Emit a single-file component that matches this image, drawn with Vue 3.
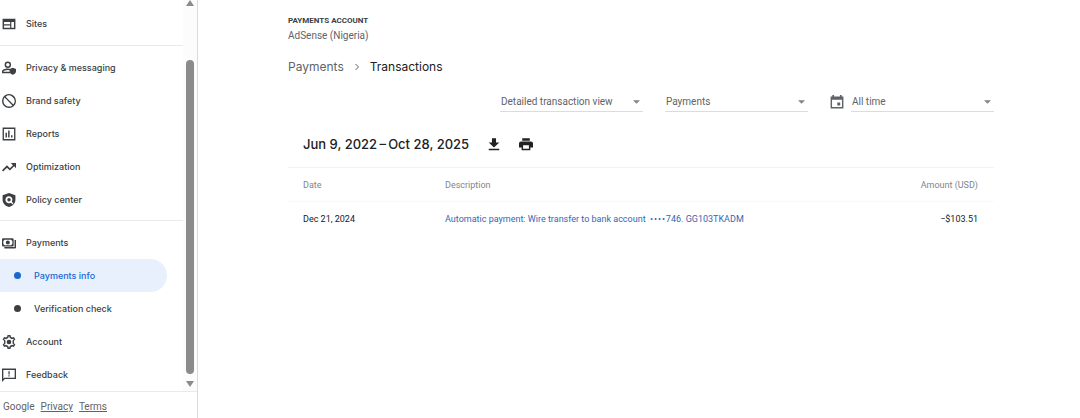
<template>
  <div class="layout">
    <aside class="sidebar">
      <div class="sidebar-body">
        <nav class="nav" aria-label="Main">
          <ul v-for="(group, index) in groups" :key="index" class="nav-group">
            <li v-for="item in group" :key="item.label">
              <a
                href="#"
                :class="['nav-item', { child: item.child, active: item.active }]"
                :aria-current="item.active ? 'page' : undefined"
              >
                <span v-if="item.child" class="dot" aria-hidden="true"></span>
                <svg v-else class="nav-icon" viewBox="0 0 24 24" aria-hidden="true">
                  <path :d="icons[item.icon]" fill-rule="evenodd" />
                </svg>
                <span>{{ item.label }}</span>
              </a>
            </li>
          </ul>
        </nav>
        <div class="scrollbar" aria-hidden="true">
          <svg class="scroll-arrow" viewBox="0 0 8 6"><path d="M4 0 8 6H0z" /></svg>
          <div class="scroll-thumb"></div>
          <svg class="scroll-arrow" viewBox="0 0 8 6"><path d="M4 6 0 0h8z" /></svg>
        </div>
      </div>
      <footer class="sidebar-footer">
        <span>Google</span>
        <a href="#">Privacy</a>
        <a href="#">Terms</a>
      </footer>
    </aside>

    <main class="content">
      <header class="account">
        <div class="account-label">Payments account</div>
        <div class="account-name">AdSense (Nigeria)</div>
      </header>

      <nav class="breadcrumb" aria-label="Breadcrumb">
        <a href="#">Payments</a>
        <svg viewBox="0 0 6 8" aria-hidden="true"><path d="M1.5 1 4.5 4l-3 3" /></svg>
        <span aria-current="page">Transactions</span>
      </nav>

      <div class="filters">
        <div v-for="filter in filters" :key="filter.label" class="filter">
          <svg v-if="filter.calendar" class="calendar" viewBox="0 0 24 24" aria-hidden="true">
            <path :d="icons.calendar" fill-rule="evenodd" />
          </svg>
          <div class="select-wrap">
            <select v-model="filter.value" :aria-label="filter.label">
              <option>{{ filter.value }}</option>
            </select>
            <svg class="caret" viewBox="0 0 8 4" aria-hidden="true"><path d="M0 0h8L4 4z" /></svg>
          </div>
        </div>
      </div>

      <div class="period">
        <h1>Jun 9, 2022&thinsp;–&thinsp;Oct 28, 2025</h1>
        <button type="button" aria-label="Download">
          <svg viewBox="0 0 24 24"><path :d="icons.download" /></svg>
        </button>
        <button type="button" aria-label="Print">
          <svg viewBox="0 0 24 24"><path :d="icons.print" /></svg>
        </button>
      </div>

      <table class="transactions">
        <thead>
          <tr>
            <th class="date">Date</th>
            <th>Description</th>
            <th class="amount">Amount (USD)</th>
          </tr>
        </thead>
        <tbody>
          <tr v-for="row in transactions" :key="row.account">
            <td>{{ row.date }}</td>
            <td>
              <a href="#">{{ row.description }}&nbsp; •&hairsp;•&hairsp;•&hairsp;•&hairsp;{{ row.account }}</a>
            </td>
            <td class="amount">{{ row.amount }}</td>
          </tr>
        </tbody>
      </table>
    </main>
  </div>
</template>

<script setup>
import { ref } from 'vue'

const groups = [
  [{ label: 'Sites', icon: 'sites' }],
  [
    { label: 'Privacy & messaging', icon: 'privacy' },
    { label: 'Brand safety', icon: 'block' },
    { label: 'Reports', icon: 'reports' },
    { label: 'Optimization', icon: 'trend' },
    { label: 'Policy center', icon: 'policy' },
  ],
  [
    { label: 'Payments', icon: 'payments' },
    { label: 'Payments info', child: true, active: true },
    { label: 'Verification check', child: true },
    { label: 'Account', icon: 'settings' },
    { label: 'Feedback', icon: 'feedback' },
  ],
]

const filters = ref([
  { label: 'Transaction view', value: 'Detailed transaction view' },
  { label: 'Transaction type', value: 'Payments' },
  { label: 'Date range', value: 'All time', calendar: true },
])

const transactions = [
  {
    date: 'Dec 21, 2024',
    description: 'Automatic payment: Wire transfer to bank account',
    account: '746. GG103TKADM',
    amount: '−$103.51',
  },
]

const icons = {
  sites: 'M1 3h22v18H1zM3.500 8.500v4h10.500v-4zM3.500 14.500v4h10.500v-4zM16 8.500v10h4.500v-10z',
  privacy: 'M10 1a5.500 5.500 0 1 1 0 11 5.500 5.500 0 0 1 0-11zm0 2.500a3 3 0 1 0 0 6 3 3 0 0 0 0-6zM0 21v-3c0-3 5-5 10-5l3 .3v2.500l-3-.3c-4 0-7.500 1.500-7.500 2.500v.5H13l1 2.500zM18.500 11.500l5.500 2v4c0 3-2.500 5-5.500 6-3-1-5.500-3-5.500-6v-4z',
  block: 'M12 0a12 12 0 1 0 0 24 12 12 0 0 0 0-24zM2.500 12c0-2.200.8-4.200 2-5.800L17.800 19.500A9.500 9.500 0 0 1 2.500 12zm17 5.800L6.200 4.500a9.500 9.500 0 0 1 13.300 13.300z',
  reports: 'M1 1h22v22H1zM3.300 3.300v17.400h17.400V3.300zM6 10h2.500v8H6zM10.500 6H13v12h-2.500zM15.500 14H18v4h-2.500z',
  trend: 'M15 5h9v9l-3.200-3.200-7.300 7.300-5-5-6.500 6.500L0 17.600l8.500-8.500 5 5 5.300-5.300z',
  policy: 'M12 0 23 4v7.500c0 6-4.500 10.500-11 12.500C5.500 22 1 17.500 1 11.500V4zM12 5.500a6 6 0 1 0 3.200 11l2.800 2.800 1.600-1.600-2.800-2.800A6 6 0 0 0 12 5.500zM12 8.500a3 3 0 1 1 0 6 3 3 0 0 1 0-6z',
  payments: 'M2 4h16a2 2 0 0 1 2 2v10a2 2 0 0 1-2 2H2a2 2 0 0 1-2-2V6a2 2 0 0 1 2-2zM4.500 6.300 2.300 8.500v5l2.200 2.200h11l2.200-2.200v-5l-2.200-2.200zM10 7.500a3.500 3.500 0 1 1 0 7 3.500 3.500 0 0 1 0-7zM21.500 7H24v12.500a2 2 0 0 1-2 2H4V19h17.500z',
  settings: 'M9.500 0h5l.7 3.200 2 1.200 3.200-1 2.500 4.300-2.400 2.300v4l2.400 2.300-2.500 4.300-3.200-1-2 1.200-.7 3.200h-5l-.7-3.200-2-1.200-3.200 1-2.500-4.300L3.500 14v-4L1.100 7.700l2.500-4.300 3.200 1 2-1.200zM11.400 2.500l-.6 2.500L7 7.200l-2.500-.8-.6 1.100 2 1.900v5.200l-2 1.900.6 1.100 2.500-.8 3.800 2.200.6 2.500h1.200l.6-2.500 3.800-2.200 2.500.8.600-1.100-2-1.900V9.400l2-1.900-.6-1.100-2.500.8L13.200 5l-.6-2.500zM12 8a4 4 0 1 1 0 8 4 4 0 0 1 0-8z',
  feedback: 'M0 1h24v18H5l-5 5zM2.300 3.300v15l1.700-1.600h17.700V3.300zM11 5.500h2.200v5.500H11zM11 12.500h2.200v2.200H11z',
  calendar: 'M4 0h3v2.500h10V0h3v2.500h3V23H1V2.500h3zM3.500 8v12.500h17V8zM12.500 13h5v5h-5z',
  download: 'M8.500 2h7v7.500H21l-9 8.500-9-8.500h5.500zM3 20h18v2.500H3z',
  print: 'M5.500 2h13v4.500h-13zM3.500 7.500h17A3.500 3.500 0 0 1 24 11v7h-4.500v4.500h-15V18H0v-7a3.500 3.500 0 0 1 3.500-3.500zM7 14v6h10v-6z',
}
</script>

<style>
body {
  background: #fff;
}
</style>

<style scoped>
.layout {
  display: flex;
  min-height: 100vh;
  color: #3c4043;
  font-family: Roboto, sans-serif;
}

a {
  color: inherit;
}

/* Sidebar */
.sidebar {
  display: flex;
  flex-direction: column;
  box-sizing: border-box;
  width: 198px;
  flex-shrink: 0;
  border-right: 1px solid #dadce0;
}

.sidebar-body {
  display: flex;
}

.nav {
  flex: 1;
  padding-top: 7px;
  font-family: Inter, sans-serif;
  font-size: 9px;
  font-weight: 500;
}

.nav-group {
  list-style: none;
  margin: 0;
  padding: 0;
}

.nav-group + .nav-group {
  margin-top: 4px;
  padding-top: 5px;
  border-top: 1px solid #e8eaed;
}

.nav-group:first-child {
  padding-bottom: 1px;
}

.nav-item {
  display: flex;
  align-items: center;
  gap: 10px;
  box-sizing: border-box;
  height: 33px;
  margin-right: 16px;
  padding-left: 2px;
  border-radius: 0 17px 17px 0;
  text-decoration: none;
}

.nav-item.child {
  gap: 13px;
  padding-left: 14px;
}

.nav-item.active {
  background: #e8f0fe;
  color: #1967d2;
}

.nav-icon {
  width: 14px;
  height: 14px;
  fill: #3c4043;
}

.dot {
  width: 7px;
  height: 7px;
  border-radius: 50%;
  background: currentColor;
}

.scrollbar {
  display: flex;
  flex-direction: column;
  align-items: center;
  width: 14px;
  padding-bottom: 4px;
  background: #fcfcfc;
}

.scroll-arrow {
  width: 8px;
  height: 6px;
  fill: #8b8b8b;
}

.scroll-thumb {
  flex: 1;
  width: 8px;
  margin: 54px 0 7px;
  border-radius: 4px;
  background: #8b8b8b;
}

.sidebar-footer {
  display: flex;
  gap: 6px;
  padding: 9px 3px;
  border-top: 1px solid #e8eaed;
  color: #5f6368;
  font-size: 10px;
  line-height: 12px;
}

/* Main content */
.content {
  flex: 1;
  padding: 15px 86px 0 90px;
}

.account-label {
  color: #3c4043;
  font-size: 8px;
  font-weight: 700;
  line-height: 12px;
  text-transform: uppercase;
}

.account-name {
  margin-top: 3px;
  color: #5f6368;
  font-size: 10px;
  line-height: 12px;
}

.breadcrumb {
  display: flex;
  align-items: center;
  gap: 10px;
  margin-top: 17px;
  color: #202124;
  font-family: Inter, sans-serif;
  font-size: 12px;
  line-height: 16px;
}

.breadcrumb a {
  color: #5f6368;
  text-decoration: none;
}

.breadcrumb svg {
  width: 6px;
  height: 8px;
  fill: none;
  stroke: #5f6368;
}

.filters {
  display: flex;
  justify-content: flex-end;
  gap: 22px;
  margin-top: 17px;
}

.filter {
  display: flex;
  align-items: center;
  gap: 7px;
}

.select-wrap {
  display: flex;
  align-items: center;
  width: 143px;
  border-bottom: 1px solid #dadce0;
}

.select-wrap select {
  flex: 1;
  height: 19px;
  margin: 0 -8px 0 0;
  padding: 0 8px 0 1px;
  border: 0;
  appearance: none;
  background: transparent;
  color: #5f6368;
  font-family: Roboto, sans-serif;
  font-size: 10px;
}

.caret {
  width: 7px;
  height: 4px;
  margin-right: 3px;
  fill: #80868b;
  pointer-events: none;
}

.calendar {
  width: 14px;
  height: 14px;
  fill: #5f6368;
}

.period {
  display: flex;
  align-items: center;
  gap: 18px;
  margin-top: 22px;
  padding-left: 15px;
}

.period h1 {
  margin: 0;
  color: #202124;
  font-family: Inter, sans-serif;
  font-size: 13px;
  font-weight: 500;
  line-height: 20px;
}

.period button {
  display: flex;
  padding: 0;
  border: 0;
  background: none;
  cursor: pointer;
}

.period svg {
  width: 14px;
  height: 14px;
  fill: #202124;
  fill-rule: evenodd;
}

/* Transactions table */
.transactions {
  width: 100%;
  margin-top: 13px;
  border-collapse: collapse;
  font-size: 9px;
  color: #202124;
}

.transactions th,
.transactions td {
  height: 34px;
  padding: 0;
  text-align: left;
}

.transactions th {
  height: 33px;
  border-top: 1px solid #f1f3f4;
  border-bottom: 1px solid #f8f9fa;
  color: #80868b;
  font-weight: 400;
}

.transactions .date {
  width: 142px;
}

.transactions th:first-child,
.transactions td:first-child {
  padding-left: 15px;
}

.transactions th.amount,
.transactions td.amount {
  padding-right: 16px;
  text-align: right;
}

.transactions a {
  color: #3367b5;
  text-decoration: none;
}
</style>
